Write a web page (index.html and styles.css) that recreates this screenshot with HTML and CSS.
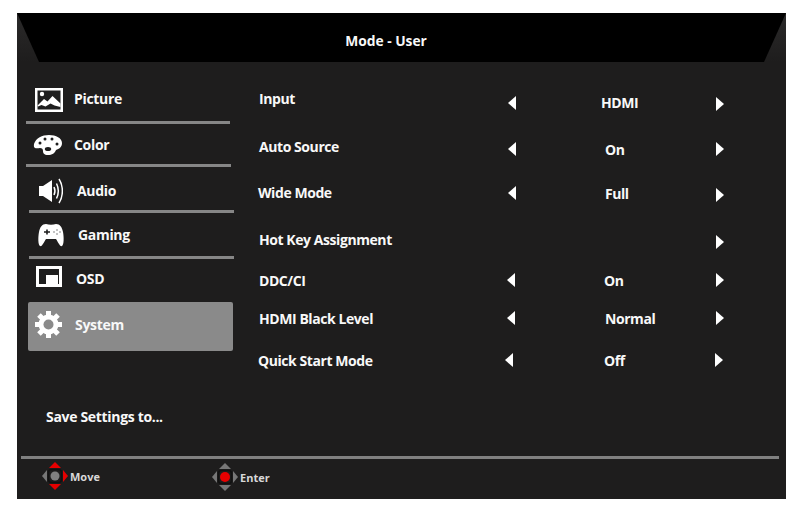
FILE: index.html
```html
<!DOCTYPE html>
<html lang="en">
<head>
<meta charset="utf-8">
<title>Mode - User</title>
<link rel="stylesheet" href="styles.css">
</head>
<body>
<main class="osd">
  <header class="head">
    <svg class="head-bg" viewBox="0 0 769 49" aria-hidden="true"><polygon points="0,0 769,0 747,49 22,49" fill="#000"/></svg>
    <h1 class="title">Mode - User</h1>
  </header>
  <div class="body">
    <nav class="side">
      <div class="item i-picture">
        <svg class="icon" width="28" height="24" viewBox="0 0 28 24"><rect width="28" height="24" fill="#fff"/><rect x="2.500" y="2.500" width="23" height="19" fill="#1e1e1e"/><circle cx="7" cy="6" r="2.200" fill="#fff"/><path d="M2.500 17.500 9 11l3.500 2.500L17.500 8 25.500 15.500v3.500l-6-1.500-4-2-5 3-4-1.500-3.500 1.500z" fill="#fff"/></svg>
        <span class="label">Picture</span>
      </div>
      <div class="item i-color">
        <svg class="icon" width="29" height="20" viewBox="0 0 29 20"><path d="M1 9C3 3 9 0 16 0c7 0 13 3 13 8 0 4-3 6-6 7-1 3-4 5-8 5-4 0-5-2-5-4 0-2-1-3-3-3-2 0-5 1-6-1-.3-1 0-2 0-3z" fill="#fff"/><g fill="#1e1e1e"><circle cx="7" cy="8" r="1.500"/><circle cx="12" cy="4" r="1.500"/><circle cx="19" cy="4" r="1.500"/><circle cx="24" cy="9" r="1.500"/><ellipse cx="15" cy="14" rx="3.200" ry="2"/></g></svg>
        <span class="label">Color</span>
      </div>
      <div class="item i-audio">
        <svg class="icon" width="24" height="26" viewBox="0 0 24 26"><path d="M0 8h4l9-6v22l-9-6H0z" fill="#fff"/><g fill="none" stroke="#fff" stroke-width="1.500"><path d="M15 9c1.200 2.500 1.200 5.500 0 8"/><path d="M17.500 5.500c2.200 4.500 2.200 10.500 0 15"/><path d="M20 1c4.500 7 4.500 17 0 24"/></g></svg>
        <span class="label">Audio</span>
      </div>
      <div class="item i-gaming">
        <svg class="icon" width="26" height="23" viewBox="0 0 26 23"><path d="M8 0c3 1 7 1 10 0 4 0 6 3 7 8 1 5 1 13-1 14-2 1-4-4-6-7H8c-2 3-4 8-6 7C0 21 0 13 1 8c1-5 3-8 7-8z" fill="#fff"/><path d="M6 8h6M9 5.500v5" stroke="#1e1e1e" stroke-width="1.600"/><g fill="#777"><circle cx="16" cy="8" r=".8"/><circle cx="19" cy="6" r=".8"/><circle cx="19" cy="10" r=".8"/><circle cx="22" cy="8" r=".8"/></g></svg>
        <span class="label">Gaming</span>
      </div>
      <div class="item i-osd">
        <svg class="icon" width="26" height="21" viewBox="0 0 26 21"><rect width="26" height="21" fill="#fff"/><rect x="3" y="3" width="20" height="15" fill="#1e1e1e"/><rect x="10" y="9" width="12" height="9" fill="#fff"/></svg>
        <span class="label">OSD</span>
      </div>
      <div class="item i-system">
        <svg class="icon" width="27" height="27" viewBox="-13.500 -13.500 27 27"><g fill="#fff"><rect x="-2.500" y="-13.500" width="5" height="27"/><rect x="-2.500" y="-13.500" width="5" height="27" transform="rotate(45)"/><rect x="-2.500" y="-13.500" width="5" height="27" transform="rotate(90)"/><rect x="-2.500" y="-13.500" width="5" height="27" transform="rotate(135)"/><circle r="10"/></g><circle r="5" fill="#8a8a8a"/></svg>
        <span class="label">System</span>
      </div>
      <div class="save">Save Settings to...</div>
    </nav>
    <section class="rows">
      <div class="row r-input"><span class="name">Input</span><span class="arr arr-l"></span><span class="val">HDMI</span><span class="arr arr-r"></span></div>
      <div class="row r-auto"><span class="name">Auto Source</span><span class="arr arr-l"></span><span class="val">On</span><span class="arr arr-r"></span></div>
      <div class="row r-wide"><span class="name">Wide Mode</span><span class="arr arr-l"></span><span class="val">Full</span><span class="arr arr-r"></span></div>
      <div class="row r-hot"><span class="name">Hot Key Assignment</span><span></span><span></span><span class="arr arr-r"></span></div>
      <div class="row r-ddc"><span class="name">DDC/CI</span><span class="arr arr-l"></span><span class="val">On</span><span class="arr arr-r"></span></div>
      <div class="row r-black"><span class="name">HDMI Black Level</span><span class="arr arr-l"></span><span class="val">Normal</span><span class="arr arr-r"></span></div>
      <div class="row r-quick"><span class="name">Quick Start Mode</span><span class="arr arr-l"></span><span class="val">Off</span><span class="arr arr-r"></span></div>
    </section>
  </div>
  <footer class="foot">
    <div class="hint h-move">
      <svg class="dpad" width="28" height="28" viewBox="0 0 28 28"><polygon points="14,0 20,6 8,6" fill="#e60000"/><polygon points="14,28 20,22 8,22" fill="#e60000"/><polygon points="1,14 6,8 6,20" fill="#777"/><polygon points="27,14 22,8 22,20" fill="#e60000"/><rect x="7.500" y="7.500" width="13" height="13" rx="3" fill="none" stroke="#111" stroke-width="1.500"/><circle cx="14" cy="14" r="4.500" fill="#808080"/></svg>
      <span>Move</span>
    </div>
    <div class="hint h-enter">
      <svg class="dpad" width="28" height="28" viewBox="0 0 28 28"><polygon points="14,0 20,6 8,6" fill="#777"/><polygon points="14,28 20,22 8,22" fill="#777"/><polygon points="1,14 6,8 6,20" fill="#777"/><polygon points="27,14 22,8 22,20" fill="#777"/><rect x="7.500" y="7.500" width="13" height="13" rx="3" fill="none" stroke="#111" stroke-width="1.500"/><circle cx="14" cy="14" r="5" fill="#e60000"/></svg>
      <span>Enter</span>
    </div>
  </footer>
</main>
</body>
</html>
```
FILE: styles.css
```css
* { box-sizing: border-box; }
html, body { margin: 0; background: #fff; }
body { padding: 13px 0 0 17px; font-family: "Open Sans", "Liberation Sans", sans-serif; font-weight: 700; color: #f8f8f8; }
.osd { width: 769px; height: 486px; background: #1e1d1d; display: flex; flex-direction: column; }
.head { height: 49px; position: relative; display: flex; align-items: center; justify-content: center; padding-right: 31px; background: linear-gradient(#2b2a2a, #1e1d1d); }
.head-bg { position: absolute; inset: 0; width: 100%; height: 100%; }
.title { position: relative; margin: 6px 0 0; font-size: 13.8px; font-weight: 700; }
.body { flex: 1; display: flex; min-height: 0; }
.side { width: 241px; flex: none; display: flex; flex-direction: column; font-size: 14px; letter-spacing: -0.32px; }
.item { display: flex; align-items: flex-start; align-self: flex-start; height: var(--h); width: var(--w); margin-left: var(--m); padding-top: var(--p); padding-left: var(--ix); border-bottom: 3px solid #868686; }
.icon { flex: none; }
.label { line-height: 24px; margin-left: var(--g); }
.i-picture { --h: 62px; --w: 204px; --m: 9px; --p: 25px; --ix: 9px; --g: 11px; }
.i-color { --h: 43px; --w: 205px; --m: 9px; --p: 9px; --ix: 7px; --g: 12px; }
.i-audio { --h: 46px; --w: 205px; --m: 12px; --p: 12px; --ix: 10px; --g: 14px; }
.i-gaming { --h: 46px; --w: 205px; --m: 12px; --p: 10px; --ix: 9px; --g: 14px; }
.i-osd { --h: 43px; --w: 205px; --m: 12px; --p: 8px; --ix: 7px; --g: 14px; border-bottom: 0; }
.i-system { --h: 49px; --w: 205px; --m: 11px; --p: 11px; --ix: 7px; --g: 13px; border-bottom: 0; background: #8a8a8a; border-radius: 2px; }
.i-picture .icon { margin-top: 1px; }
.i-color .icon { margin-top: 2px; }
.i-audio .icon { margin-top: -1px; }
.i-gaming .icon { margin-top: 1px; }
.i-osd .icon { margin-top: -1px; }
.i-system .icon { margin-top: -2px; }
.save { margin: 56px 0 0 29px; line-height: 20px; }
.rows { flex: 1; display: flex; flex-direction: column; }
.row { height: var(--rh); display: grid; grid-template-columns: 247px 95px 100px 20px; align-items: start; font-size: 14px; letter-spacing: -0.43px; }
.name { line-height: 20px; margin-top: var(--ny); margin-left: var(--nx); white-space: nowrap; }
.val { line-height: 20px; margin-top: var(--vy); margin-left: var(--vx); white-space: nowrap; }
.arr { width: 0; height: 0; border-style: solid; border-color: transparent; border-width: 7px 0; }
.arr-l { border-right: 8px solid #fff; margin-top: var(--ly); margin-left: var(--lx); }
.arr-r { border-left: 8px solid #fff; margin-top: var(--ry); margin-left: var(--rx); }
.r-input { --rh: 62px; --nx: 1px; --ny: 27px; --lx: 3px; --ly: 34px; --vx: 1px; --vy: 31px; --rx: 16px; --ry: 35px; }
.r-auto { --rh: 46px; --nx: 1px; --ny: 13px; --lx: 3px; --ly: 18px; --vx: 5px; --vy: 16px; --rx: 16px; --ry: 18px; }
.r-wide { --rh: 47px; --nx: 0px; --ny: 13px; --lx: 3px; --ly: 16px; --vx: 5px; --vy: 14px; --rx: 16px; --ry: 18px; }
.r-hot { --rh: 43px; --nx: 1px; --ny: 13px; --lx: 0px; --ly: 0px; --vx: 0px; --vy: 0px; --rx: 16px; --ry: 18px; }
.r-ddc { --rh: 38px; --nx: 1px; --ny: 11px; --lx: 2px; --ly: 13px; --vx: 4px; --vy: 11px; --rx: 16px; --ry: 13px; }
.r-black { --rh: 41px; --nx: 1px; --ny: 11px; --lx: 2px; --ly: 13px; --vx: 5px; --vy: 11px; --rx: 16px; --ry: 13px; }
.r-quick { --rh: 40px; --nx: 0px; --ny: 12px; --lx: 0px; --ly: 14px; --vx: 4px; --vy: 12px; --rx: 15px; --ry: 14px; }
.foot { height: 43px; margin-left: 4px; margin-right: 7px; border-top: 3px solid #808080; display: flex; align-items: flex-start; font-size: 11px; color: #d8d8d8; }
.hint { display: flex; align-items: center; height: 28px; margin-top: 3px; }
.h-move { margin-left: 20px; width: 170px; }
.h-enter { margin-top: 4px; }
.hint span { margin-left: 1px; }
```
